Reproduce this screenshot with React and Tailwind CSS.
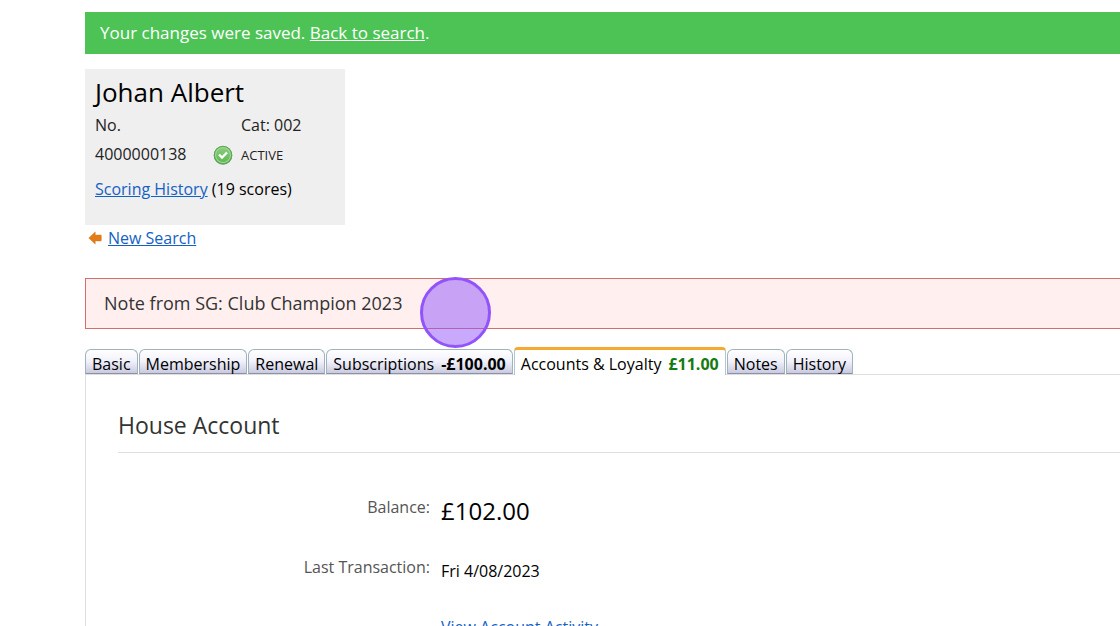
import React, { useState } from 'react';

const tabs = [
  { id: 'basic', label: 'Basic' },
  { id: 'membership', label: 'Membership' },
  { id: 'renewal', label: 'Renewal' },
  { id: 'subscriptions', label: 'Subscriptions', amount: '-£100.00', amountClass: 'text-black' },
  { id: 'accounts', label: 'Accounts & Loyalty', amount: '£11.00', amountClass: 'text-[#167a12]' },
  { id: 'notes', label: 'Notes' },
  { id: 'history', label: 'History' },
];

function ActiveIcon() {
  return (
    <svg width="20" height="20" viewBox="0 0 20 20" aria-hidden="true">
      <defs>
        <linearGradient id="activeFill" x1="0" y1="0" x2="0" y2="1">
          <stop offset="0" stopColor="#8bcb7d" />
          <stop offset="1" stopColor="#5fb955" />
        </linearGradient>
      </defs>
      <circle cx="10" cy="10.4" r="9.3" fill="#76917a" />
      <circle cx="10" cy="10" r="9.2" fill="#5bab52" />
      <circle cx="10" cy="10" r="8" fill="#a5d99a" />
      <circle cx="10" cy="10" r="7" fill="url(#activeFill)" />
      <path d="M6 9.5l3 3 5-5" fill="none" stroke="#fff" strokeWidth="2.3" />
    </svg>
  );
}

function BackArrow() {
  return (
    <svg width="14" height="14" viewBox="0 0 14 14" aria-hidden="true">
      <path d="M0.8 7L7.2 1v3.1h5.4q.7 0 .7.7v4.4q0 .7-.7.7H7.2V13z" fill="#e47d18" stroke="#c9771f" strokeWidth="0.5" strokeLinejoin="round" />
    </svg>
  );
}

function Tab({ tab, active, onSelect }) {
  return (
    <button
      type="button"
      role="tab"
      aria-selected={active}
      onClick={() => onSelect(tab.id)}
      className={
        active
          ? 'flex h-7 gap-[7px] rounded-t-sm border border-b-0 border-t-3 border-[#b5c3cf] border-t-[#f5a92e] bg-white px-[6px] pt-[2px] leading-6'
          : 'mb-px flex h-[25px] gap-[7px] rounded-t-md border border-[#9fb2bd] border-b-[#8d92a3] bg-linear-to-b from-white via-[#f1f1fb] to-[#c9cadf] px-[6px] pt-[2px] leading-6'
      }
    >
      {tab.label}
      {tab.amount && <span className={`font-bold ${tab.amountClass}`}>{tab.amount}</span>}
    </button>
  );
}

export default function App() {
  const [activeTab, setActiveTab] = useState('accounts');

  return (
    <main className="relative h-screen overflow-hidden bg-white pt-3 pl-[85px] font-['Open_Sans',sans-serif] text-base text-black">
      <div className="bg-[#4dc356] px-[15px] py-[9px] text-[17px] leading-6 text-white">
        Your changes were saved. <a href="#search" className="underline">Back to search</a>.
      </div>

      {/* Member summary */}
      <section className="mt-[15px] h-[156px] w-[260px] bg-[#efefef] px-[10px] pt-[7px]">
        <h1 className="text-[26px] leading-8">Johan Albert</h1>
        <div className="mt-[5px] grid grid-cols-[118px_1fr] text-[#222]">
          <span className="leading-6">No.</span>
          <span className="pl-7 leading-6">Cat: 002</span>
          <span className="pt-1 leading-[26px]">4000000138</span>
          <span className="flex items-center gap-2 pt-1 text-[13px] leading-7">
            <ActiveIcon />
            ACTIVE
          </span>
        </div>
        <p className="mt-2 leading-6">
          <a href="#scores" className="text-[#1461c4] underline">Scoring History</a> (19 scores)
        </p>
      </section>

      <div className="mt-px flex items-center gap-[6px] pl-[3px] leading-6">
        <BackArrow />
        <a href="#new-search" className="text-[#1461c4] underline">New Search</a>
      </div>

      <div className="mt-7 border border-r-0 border-[#d0706b] bg-[#fff0ef] py-[11px] pl-[18px] text-lg leading-[27px] text-[#333]">
        Note from SG: Club Champion 2023
      </div>

      {/* Tab strip */}
      <div role="tablist" className="relative mt-[18px] flex items-end gap-px">
        {tabs.map((tab) => (
          <Tab key={tab.id} tab={tab} active={tab.id === activeTab} onSelect={setActiveTab} />
        ))}
      </div>

      <section role="tabpanel" className="-mt-px border-t border-l border-[#dedede] pl-8">
        <h2 className="border-b border-[#dedede] pt-[34px] pb-[11px] text-[23px] leading-8 text-[#333]">House Account</h2>
        <dl className="grid grid-cols-[312px_1fr] gap-x-[11px] pt-10">
          <dt className="h-[60px] pt-[2px] text-right leading-6 text-[#555]">Balance:</dt>
          <dd className="text-2xl leading-9">£102.00</dd>
          <dt className="pt-[2px] text-right leading-6 text-[#555]">Last Transaction:</dt>
          <dd className="h-[62px] pt-[6px] leading-6">Fri 4/08/2023</dd>
          <dd className="col-start-2 leading-6">
            <a href="#activity" className="text-[#1461c4] underline">View Account Activity</a>
          </dd>
        </dl>
      </section>

      {/* Click marker */}
      <div className="pointer-events-none absolute top-[277px] left-[420px] size-[71px] rounded-full border-3 border-[#9254fa] bg-[#9254fa]/50" />
    </main>
  );
}
